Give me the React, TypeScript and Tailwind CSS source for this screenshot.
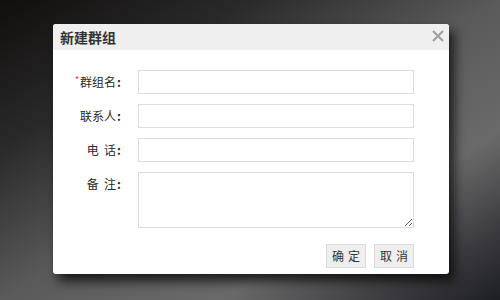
import React from "react";

const font = { fontFamily: '"Noto Sans CJK SC", "Noto Sans", sans-serif' };

function Row({ label, required, children, top }: { label: React.ReactNode; required?: boolean; children: React.ReactNode; top?: boolean }) {
  return (
    <div className={`flex ${top ? "items-start" : "items-center"}`}>
      <div className="w-[68px] shrink-0 flex justify-end items-center h-[24px] text-[12px] text-[#2a2a2a] leading-none whitespace-pre">
        {required && <span className="text-[#e0245e] text-[9px] self-start mt-[5px] mr-[1px]">*</span>}
        {label}
        <span className="font-bold ml-[1px]">:</span>
      </div>
      <div className="ml-[17px]">{children}</div>
    </div>
  );
}

export default function App() {
  return (
    <div
      className="w-[500px] h-[300px] overflow-hidden pt-[24px] pl-[53px] bg-[linear-gradient(to_bottom_right,#110e0d_0%,#2a2a2a_25%,#5a5a5a_50%,#6a6a6a_72%,#3c3c40_88%,#1e1f23_100%)]"
      style={font}
    >
      <div className="w-[396px] h-[250px] bg-white rounded-[3px] overflow-hidden shadow-[5px_7px_12px_rgba(0,0,0,0.75)] flex flex-col">
        <div className="h-[26px] bg-[#efefef] flex items-center justify-between pl-[7px] pr-[5px]">
          <span className="text-[14px] font-bold text-[#333] leading-none">新建群组</span>
          <svg width="12" height="12" viewBox="0 0 12 12" className="mb-[2px]">
            <path d="M1 1 L11 11 M11 1 L1 11" stroke="#a0a0a0" strokeWidth="2.2" />
          </svg>
        </div>
        <div className="flex flex-col gap-[10px] pt-[20px]">
          <Row label="群组名" required>
            <input className="block w-[276px] h-[24px] border border-[#dcdcdc] outline-none" />
          </Row>
          <Row label="联系人">
            <input className="block w-[276px] h-[24px] border border-[#dcdcdc] outline-none" />
          </Row>
          <Row label={"电  话"}>
            <input className="block w-[276px] h-[24px] border border-[#dcdcdc] outline-none" />
          </Row>
          <Row label={"备  注"} top>
            <textarea className="block w-[276px] h-[56px] border border-[#dcdcdc] outline-none" />
          </Row>
          <div className="flex justify-end gap-[8px] w-[361px] mt-[6px]">
            <button className="w-[40px] h-[24px] bg-[#efefef] border border-[#dcdcdc] text-[12px] text-[#333] tracking-[4px] pl-[4px] leading-none">确定</button>
            <button className="w-[40px] h-[24px] bg-[#efefef] border border-[#dcdcdc] text-[12px] text-[#333] tracking-[4px] pl-[4px] leading-none">取消</button>
          </div>
        </div>
      </div>
    </div>
  );
}
